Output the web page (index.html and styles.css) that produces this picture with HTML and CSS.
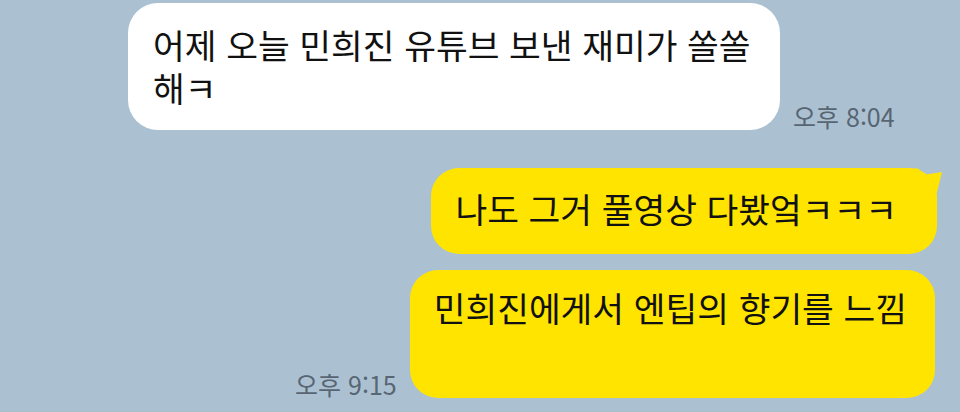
FILE: index.html
```html
<!DOCTYPE html>
<html lang="ko">
  <head>
    <meta charset="UTF-8" />
    <meta name="viewport" content="width=device-width, initial-scale=1.0" />
    <title>채팅</title>
    <link rel="stylesheet" href="styles.css">
  </head>
  <body>
    <div class="chat">
      <div class="row row-in">
        <div class="bubble bubble-in">어제 오늘 민희진 유튜브 보낸 재미가 쏠쏠 해ㅋ</div>
        <span class="time">오후 8:04</span>
      </div>

      <div class="row row-out row-first">
        <div class="bubble bubble-out tail">나도 그거 풀영상 다봤엌ㅋㅋㅋ</div>
      </div>

      <div class="row row-out row-next">
        <span class="time">오후 9:15</span>
        <div class="bubble bubble-out bubble-tall">민희진에게서 엔팁의 향기를 느낌</div>
      </div>
    </div>
  </body>
</html>
```

FILE: styles.css
```css
body {
  margin: 0;
  background-color: #abc1d1;
  font-family: "Noto Sans CJK KR", "Noto Sans", sans-serif;
  color: #111;
}

.chat {
  width: 960px;
  height: 412px;
  overflow: hidden;
  padding-top: 3px;
  box-sizing: border-box;
}

.row {
  display: flex;
  align-items: flex-end;
}

.row-in {
  padding-left: 128px;
}

.row-out {
  justify-content: flex-end;
}

.row-first {
  margin-top: 38px;
  padding-right: 23px;
}

.row-next {
  margin-top: 16px;
  padding-right: 25px;
}

.bubble {
  font-size: 34.5px;
  line-height: 43px;
  box-sizing: border-box;
  word-break: keep-all;
}

.bubble-in {
  width: 652px;
  padding: 20px 28px 21px 25px;
  background-color: #fff;
  border-radius: 30px;
}

.bubble-out {
  background-color: #ffe400;
  border-radius: 28px;
  white-space: nowrap;
}

.tail {
  position: relative;
  padding: 19px 40px 24px 24px;
}

.tail::after {
  content: "";
  position: absolute;
  top: 0;
  right: -6px;
  width: 28px;
  height: 24px;
  background-color: #ffe400;
  clip-path: polygon(0 0, 4px 1px, 8px 7px, 27px 4px, 22px 24px, 0 24px);
}

.bubble-tall {
  padding: 16px 28px 69px 24px;
}

.time {
  font-size: 25px;
  line-height: 28px;
  color: #586573;
  white-space: nowrap;
}

.row-in .time {
  margin-left: 13px;
}

.row-next .time {
  margin-right: 13px;
}
```
